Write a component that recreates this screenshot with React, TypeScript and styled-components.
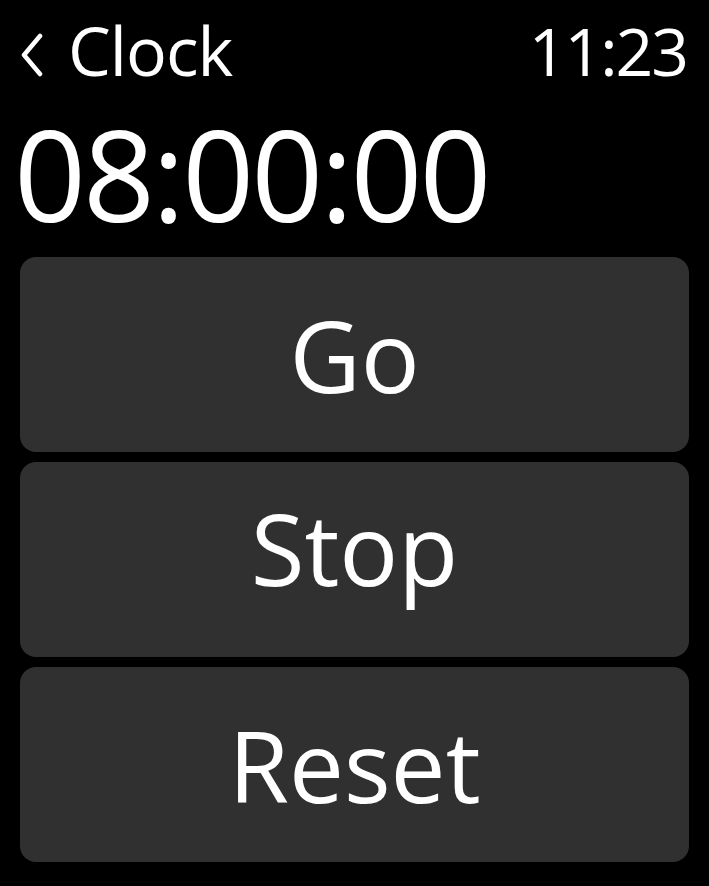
import React from "react";
import styled, { createGlobalStyle } from "styled-components";

const Global = createGlobalStyle`
  html, body {
    margin: 0;
    padding: 0;
    background: #000;
  }
  body {
    font-family: "Open Sans", "Noto Sans", sans-serif;
    color: #fff;
  }
`;

const Screen = styled.div`
  width: 709px;
  height: 886px;
  background: #000;
  display: flex;
  flex-direction: column;
  overflow: hidden;
`;

const Header = styled.div`
  display: flex;
  align-items: flex-start;
  justify-content: space-between;
  padding: 15px 22px 0 20px;
  height: 70px;
`;

const Back = styled.div`
  display: flex;
  align-items: flex-start;
  gap: 24px;
`;

const Chevron = styled.svg`
  width: 24px;
  height: 44px;
  margin-top: 18px;
  flex: none;
`;

const HeaderText = styled.span<{ $size: number; $spacing?: number }>`
  font-size: ${(p) => p.$size}px;
  line-height: 70px;
  letter-spacing: ${(p) => p.$spacing ?? 0}px;
  font-weight: 400;
  white-space: nowrap;
`;

const Timer = styled.div`
  margin-top: 25px;
  padding-left: 14px;
  font-size: 126px;
  line-height: 126px;
  letter-spacing: -3px;
  white-space: nowrap;
`;

const Buttons = styled.div`
  display: flex;
  flex-direction: column;
  gap: 10px;
  margin: 21px 20px 0 20px;
`;

const ActionButton = styled.button<{ $lift?: number }>`
  height: 195px;
  border: none;
  border-radius: 16px;
  background: #303030;
  color: #fff;
  font-family: "Open Sans", "Noto Sans", sans-serif;
  font-size: 98px;
  display: flex;
  align-items: center;
  justify-content: center;
  padding: 0 0 ${(p) => (p.$lift ?? 0) * 2}px 0;
  cursor: pointer;
`;

export default function App() {
  return (
    <>
      <Global />
      <Screen>
        <Header>
          <Back>
            <Chevron viewBox="0 0 24 44">
              <polyline
                points="20,3 4,22 20,41"
                fill="none"
                stroke="#fff"
                strokeWidth="4.5"
                strokeLinecap="round"
                strokeLinejoin="round"
              />
            </Chevron>
            <HeaderText $size={68} $spacing={-1}>Clock</HeaderText>
          </Back>
          <HeaderText $size={66} $spacing={-2}>11:23</HeaderText>
        </Header>
        <Timer>08:00:00</Timer>
        <Buttons>
          <ActionButton>Go</ActionButton>
          <ActionButton $lift={12}>Stop</ActionButton>
          <ActionButton>Reset</ActionButton>
        </Buttons>
      </Screen>
    </>
  );
}
